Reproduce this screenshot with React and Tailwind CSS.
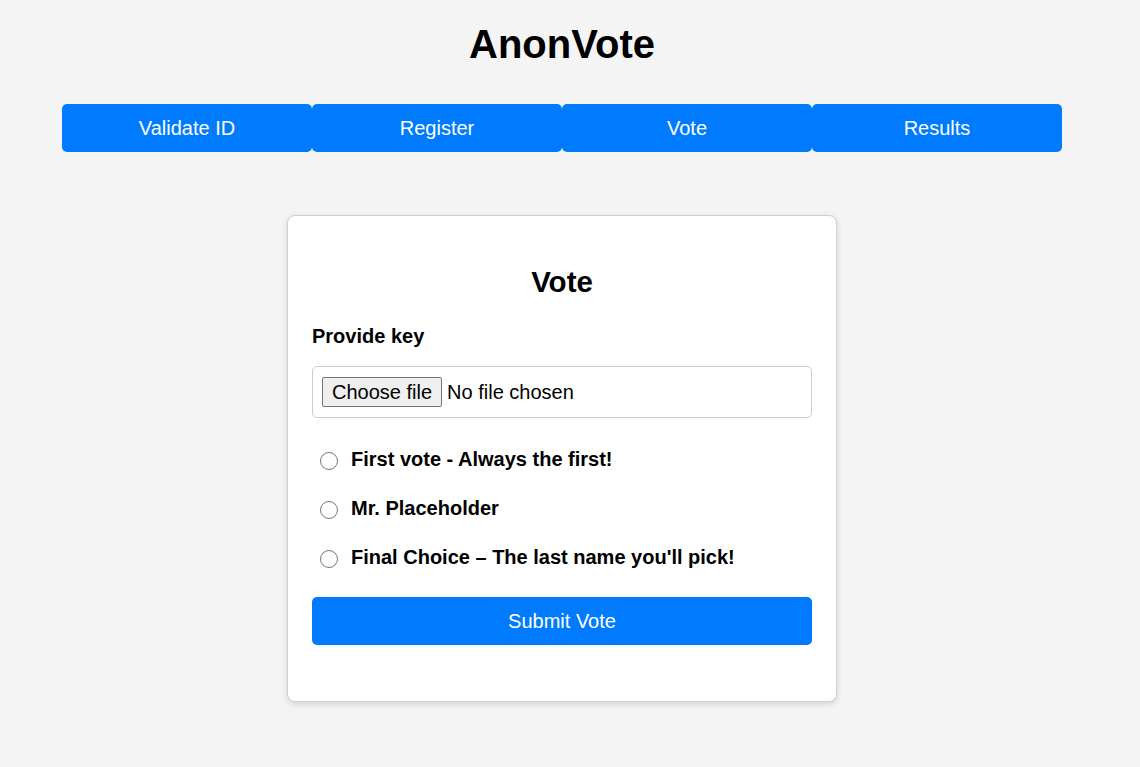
const tabs = ['Validate ID', 'Register', 'Vote', 'Results'];

const options = [
  'First vote - Always the first!',
  'Mr. Placeholder',
  "Final Choice – The last name you'll pick!",
];

const App = () => {
  return (
    <div className="min-h-screen bg-[#f4f4f4] font-['Liberation_Sans',Arial,sans-serif] text-black">
      <div className="w-[1124px] flex flex-col items-center">
        <h1 className="mt-[21px] text-[40px] leading-[46px] font-bold">AnonVote</h1>

        {/* Nav */}
        <nav className="mt-[37px] flex w-[1000px]">
          {tabs.map((tab) => (
            <button
              key={tab}
              className="flex-1 h-12 bg-[#007bff] text-white text-[20px] rounded-[5px]"
            >
              {tab}
            </button>
          ))}
        </nav>

        {/* Card */}
        <div className="mt-[63px] w-[550px] bg-white border border-[#d0d0d0] rounded-lg shadow-[0_2px_6px_rgba(0,0,0,0.14)] p-6">
          <h2 className="mt-[26px] text-[29.5px] leading-[32px] font-bold text-center">Vote</h2>

          <label className="block mt-[26px] text-[20px] leading-6 font-bold">Provide key</label>

          {/* File picker */}
          <label className="mt-[18px] flex items-center w-full h-[52px] px-[9px] border border-[#ccc] rounded-[5px] text-[20px] cursor-pointer">
            <input type="file" className="hidden" />
            <span className="h-[30px] px-[9px] flex items-center bg-[#efefef] border border-[#767676] rounded-[2px]">
              Choose file
            </span>
            <span className="ml-[5px]">No file chosen</span>
          </label>

          <div className="mt-[16px]">
            {options.map((opt) => (
              <label key={opt} className="flex items-center h-[49px] text-[20px] font-bold">
                <input
                  type="radio"
                  name="vote"
                  className="appearance-none w-[18px] h-[18px] ml-2 mr-[13px] mt-[4px] shrink-0 rounded-full border-[1.5px] border-[#767676] bg-white"
                />
                {opt}
              </label>
            ))}
          </div>

          <button className="mt-[16px] mb-[32px] w-full h-12 bg-[#007bff] text-white text-[20px] rounded-[5px]">
            Submit Vote
          </button>
        </div>
      </div>
    </div>
  );
};

export default App;
